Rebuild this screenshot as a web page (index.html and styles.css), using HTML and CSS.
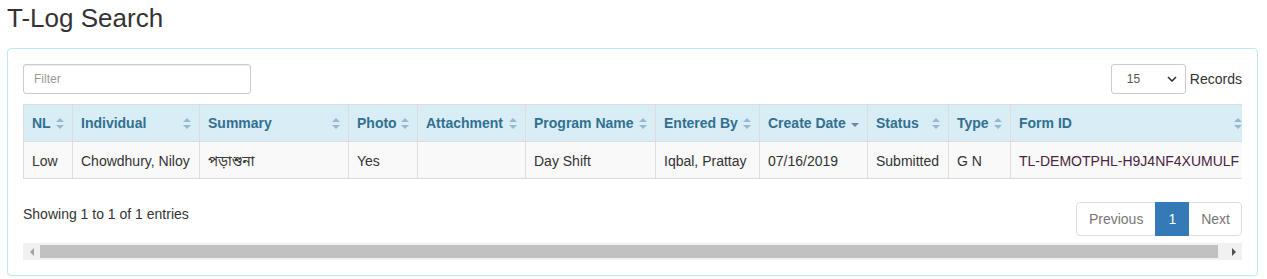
FILE: index.html
```html
<!DOCTYPE html>
<html lang="en">
<head>
<meta charset="UTF-8">
<meta name="viewport" content="width=device-width, initial-scale=1.0">
<title>T-Log Search</title>
<link rel="stylesheet" href="styles.css">
</head>
<body>
<div class="page">
  <h1 class="page-title">T-Log Search</h1>

  <div class="panel">
    <div class="dt-top">
      <input class="filter" type="text" placeholder="Filter">
      <div class="length">
        <div class="select">
          <span>15</span>
          <svg width="10" height="6" viewBox="0 0 10 6"><polyline points="1,1 5,5 9,1" fill="none" stroke="#333" stroke-width="1.6"/></svg>
        </div>
        <span class="length-label">Records</span>
      </div>
    </div>

    <div class="table-wrap">
      <table class="grid">
        <colgroup>
          <col style="width:49px">
          <col style="width:127px">
          <col style="width:149px">
          <col style="width:69px">
          <col style="width:108px">
          <col style="width:130px">
          <col style="width:104px">
          <col style="width:108px">
          <col style="width:81px">
          <col style="width:62px">
          <col style="width:240px">
        </colgroup>
        <thead>
          <tr>
            <th>NL<span class="sort"></span></th>
            <th>Individual<span class="sort"></span></th>
            <th>Summary<span class="sort"></span></th>
            <th>Photo<span class="sort"></span></th>
            <th>Attachment<span class="sort"></span></th>
            <th>Program Name<span class="sort"></span></th>
            <th>Entered By<span class="sort"></span></th>
            <th>Create Date<span class="sort sort-desc"></span></th>
            <th>Status<span class="sort"></span></th>
            <th>Type<span class="sort"></span></th>
            <th>Form ID<span class="sort"></span></th>
          </tr>
        </thead>
        <tbody>
          <tr>
            <td>Low</td>
            <td>Chowdhury, Niloy</td>
            <td class="bn">পড়াশুনা</td>
            <td>Yes</td>
            <td></td>
            <td>Day Shift</td>
            <td>Iqbal, Prattay</td>
            <td>07/16/2019</td>
            <td>Submitted</td>
            <td>G N</td>
            <td class="form-id">TL-DEMOTPHL-H9J4NF4XUMULF</td>
          </tr>
        </tbody>
      </table>
    </div>

    <div class="dt-bottom">
      <div class="info">Showing 1 to 1 of 1 entries</div>
      <ul class="pagination">
        <li class="disabled"><a>Previous</a></li>
        <li class="active"><a>1</a></li>
        <li class="disabled"><a>Next</a></li>
      </ul>
    </div>

    <div class="hscroll">
      <div class="hs-btn"><span class="tri-left"></span></div>
      <div class="hs-thumb"></div>
      <div class="hs-btn"><span class="tri-right"></span></div>
    </div>
  </div>
</div>
</body>
</html>
```

FILE: styles.css
```css
* {
  box-sizing: border-box;
}

body {
  margin: 0;
  font-family: "Liberation Sans", Arial, "Noto Sans Bengali", sans-serif;
  font-size: 14px;
  line-height: 20px;
  color: #333;
  background-color: #fff;
}

.page {
  padding: 0 9px 0 7px;
}

.page-title {
  margin: 0;
  font-size: 26px;
  line-height: 36px;
  font-weight: normal;
  color: #333;
}

.panel {
  margin-top: 12px;
  padding: 15px;
  border: 1px solid #bce8f1;
  border-radius: 4px;
  box-shadow: 0 1px 1px rgba(0, 0, 0, 0.05);
}

/* barra superior: filtro y cantidad de registros */
.dt-top {
  display: flex;
  justify-content: space-between;
  align-items: center;
  height: 30px;
  margin-bottom: 10px;
}

.filter {
  width: 228px;
  height: 30px;
  padding: 5px 10px;
  font-family: inherit;
  font-size: 12px;
  color: #555;
  border: 1px solid #ccc;
  border-radius: 3px;
  box-shadow: inset 0 1px 1px rgba(0, 0, 0, 0.075);
  outline: none;
}

.filter::placeholder {
  color: #999;
}

.length {
  display: flex;
  align-items: center;
}

.select {
  display: flex;
  align-items: center;
  justify-content: space-between;
  width: 75px;
  height: 30px;
  padding: 0 8px 0 15px;
  font-size: 12px;
  color: #555;
  border: 1px solid #ccc;
  border-radius: 3px;
}

.length-label {
  margin-left: 4px;
}

/* tabla */
.table-wrap {
  width: 100%;
  overflow: hidden;
}

.grid {
  table-layout: fixed;
  width: 1227px;
  border-collapse: collapse;
  border-spacing: 0;
  border: 1px solid #ddd;
}

.grid th,
.grid td {
  position: relative;
  padding: 8px;
  border: 1px solid #ddd;
  text-align: left;
  white-space: nowrap;
  overflow: hidden;
  vertical-align: top;
}

.grid td {
  padding: 9px 8px 7px;
}

.grid th {
  background-color: #d9edf7;
  color: #31708f;
  font-weight: bold;
  padding-right: 20px;
}

.grid tbody tr {
  background-color: #f9f9f9;
}

.grid .form-id {
  color: #4a2440;
}

.sort {
  position: absolute;
  right: 8px;
  top: 13px;
  width: 8px;
  height: 11px;
}

.sort::before,
.sort::after {
  content: "";
  position: absolute;
  left: 0;
  border-left: 4px solid transparent;
  border-right: 4px solid transparent;
}

.sort::before {
  top: 0;
  border-bottom: 4.5px solid #98b9cd;
}

.sort::after {
  bottom: 0;
  border-top: 4.5px solid #98b9cd;
}

.sort-desc::before {
  display: none;
}

.sort-desc::after {
  bottom: 2px;
  border-top-color: #668aa2;
}

/* barra inferior: informacion y paginacion */
.dt-bottom {
  display: flex;
  justify-content: space-between;
  align-items: flex-start;
  margin-top: 23px;
}

.info {
  padding-top: 2px;
}

.pagination {
  display: flex;
  margin: 0;
  padding: 0;
  list-style: none;
}

.pagination a {
  display: block;
  padding: 6px 12px;
  margin-left: -1px;
  line-height: 20px;
  color: #777;
  background-color: #fff;
  border: 1px solid #ddd;
}

.pagination li:first-child a {
  margin-left: 0;
  border-radius: 4px 0 0 4px;
}

.pagination li:last-child a {
  padding-right: 11px;
  border-radius: 0 4px 4px 0;
}

.pagination .active a {
  color: #fff;
  background-color: #337ab7;
  border-color: #337ab7;
  position: relative;
}

/* barra de desplazamiento dibujada */
.hscroll {
  display: flex;
  height: 17px;
  margin-top: 7px;
  background-color: #f1f1f1;
}

.hs-btn {
  width: 17px;
  display: flex;
  align-items: center;
  justify-content: center;
}

.hs-thumb {
  flex: 1;
  margin: 2px 7px 2px 0;
  background-color: #c1c1c1;
}

.tri-left {
  border-top: 4px solid transparent;
  border-bottom: 4px solid transparent;
  border-right: 4px solid #a3a3a3;
}

.tri-right {
  border-top: 4px solid transparent;
  border-bottom: 4px solid transparent;
  border-left: 4px solid #505050;
}
```
